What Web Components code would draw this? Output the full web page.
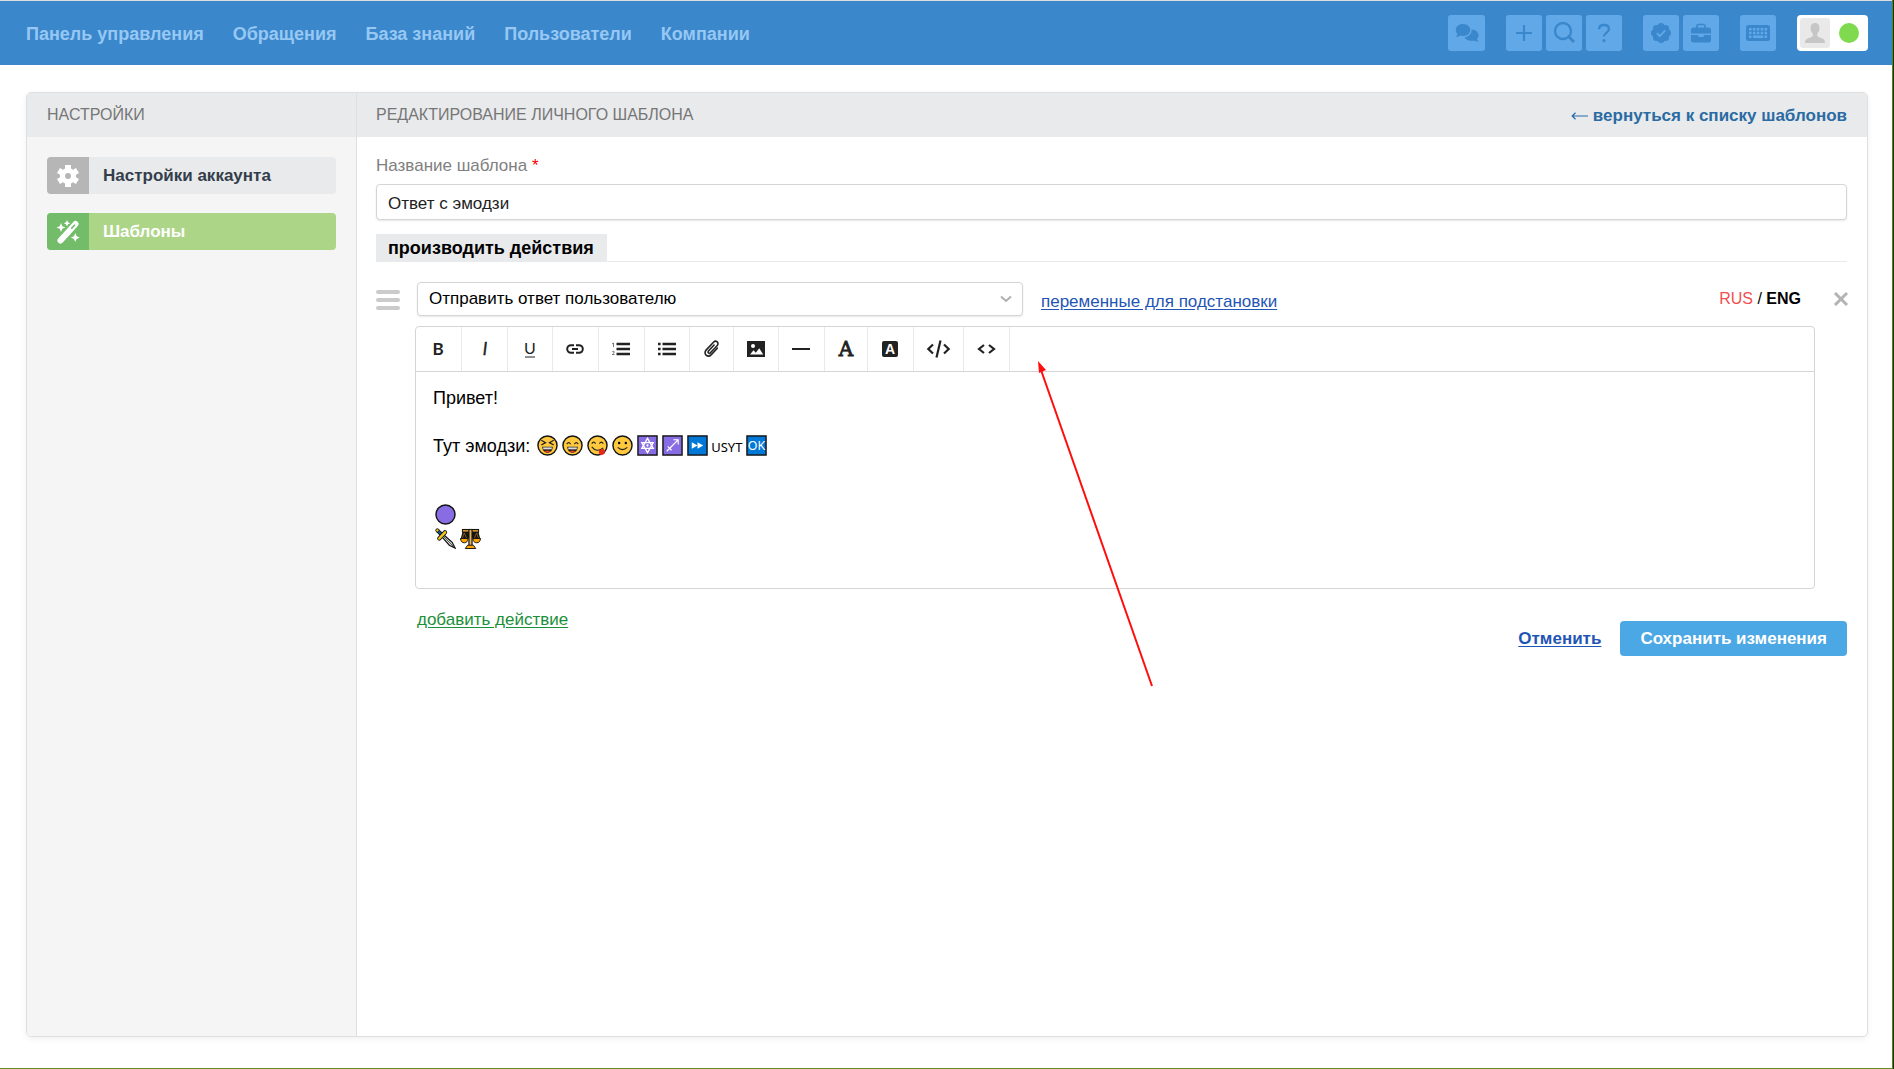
<!DOCTYPE html>
<html lang="ru">
<head>
<meta charset="utf-8">
<meta name="viewport" content="width=device-width, initial-scale=1">
<title>Редактирование личного шаблона</title>
<style>
    html {
        background: #222c1c;
    }
    body {
        box-sizing: border-box;
        display: flex;
        flex-direction: column;
        min-height: 100vh;
        margin: 0 1px 0 0;
        border-right: 1px solid #4f8a10;
        border-bottom: 1px solid #5f8f22;
        background: #fff;
        color: #000;
        font: 17px/20px "Liberation Sans", Arial, sans-serif;
    }
    settings-panel {
        flex: 1;
        margin: 27px 24px 31px 26px;
    }
    rich-editor small {
        margin: 0 2px 0 1px;
        font: 13px/20px "Noto Sans", sans-serif;
    }
</style>
</head>
<body>

<app-header>
    <nav-link href="#dashboard">Панель управления</nav-link>
    <nav-link href="#cases">Обращения</nav-link>
    <nav-link href="#kb">База знаний</nav-link>
    <nav-link href="#users">Пользователи</nav-link>
    <nav-link href="#companies">Компании</nav-link>
    <tool-group slot="tools">
        <tool-button icon="chats" label="Чаты" wide></tool-button>
    </tool-group>
    <tool-group slot="tools">
        <tool-button icon="plus" label="Создать"></tool-button>
        <tool-button icon="search" label="Поиск"></tool-button>
        <tool-button icon="question" label="Помощь"></tool-button>
    </tool-group>
    <tool-group slot="tools">
        <tool-button icon="verified" label="Задачи"></tool-button>
        <tool-button icon="briefcase" label="Компания"></tool-button>
    </tool-group>
    <tool-group slot="tools">
        <tool-button icon="keyboard" label="Горячие клавиши"></tool-button>
    </tool-group>
    <user-status slot="tools"></user-status>
</app-header>

<settings-panel>
    <span slot="side-title">НАСТРОЙКИ</span>
    <side-link slot="side" icon="gear" href="#account">Настройки аккаунта</side-link>
    <side-link slot="side" icon="wand" href="#templates" active>Шаблоны</side-link>
    <span slot="title">РЕДАКТИРОВАНИЕ ЛИЧНОГО ШАБЛОНА</span>
    <back-link slot="back" href="#list">вернуться к списку шаблонов</back-link>
    <template-form>
        <template-action>
            <rich-editor>
                <p>Привет!</p>
                <p>Тут эмодзи: <emoji-icon name="laugh"></emoji-icon><emoji-icon name="grin"></emoji-icon><emoji-icon name="yum"></emoji-icon><emoji-icon name="smile"></emoji-icon><emoji-icon name="star"></emoji-icon><emoji-icon name="sagittarius"></emoji-icon><emoji-icon name="forward"></emoji-icon><small>USYT</small><emoji-icon name="ok"></emoji-icon></p>
                <p class="far"><emoji-icon name="circle"></emoji-icon><br><emoji-icon name="dagger"></emoji-icon><emoji-icon name="scales"></emoji-icon></p>
            </rich-editor>
        </template-action>
    </template-form>
</settings-panel>

<pointer-arrow></pointer-arrow>

<script>
// icons: [width, height, markup]
const ICONS = {
    chats: [24, 20, `
        <path fill="currentColor" d="M8 1C3.600 1 .8 3.700.8 7c0 1.700.7 3 1.800 4.100-.3 1-1 1.800-1.900 2.600 1.800.2 3.500-.3 4.800-1.200.8.300 1.600.4 2.500.4 4.300 0 7.300-2.700 7.300-5.900S12.300 1 8 1z"/>
        <path fill="currentColor" d="M16.600 6.500c.3 4.100-3 7.300-7.100 7.700 1.200 2.400 4 3.700 7 3.600.9 0 1.700-.1 2.400-.4 1.400.9 3 1.300 4.700 1.100-.9-.7-1.500-1.500-1.800-2.500 1.100-1 1.800-2.300 1.800-3.800 0-3-3-5.500-7-5.700z"/>`],
    plus: [18, 18, `<path d="M9 1v16M1 9h16" stroke="currentColor" stroke-width="2.200" fill="none"/>`],
    search: [22, 22, `<circle cx="10" cy="9" r="8" stroke="currentColor" stroke-width="2.400" fill="none"/><path d="M15.500 14.500l5.500 5.500" stroke="currentColor" stroke-width="3"/>`],
    question: [14, 20, `<path d="M2 6.200C2 3.500 4 2 7 2s5 1.500 5 4.200c0 3.300-5 3.500-5 7.300" fill="none" stroke="currentColor" stroke-width="2.300"/><circle cx="7" cy="17.600" r="1.600" fill="currentColor"/>`],
    verified: [20, 20, `
        <g fill="currentColor"><circle cx="10" cy="10" r="8"/>
        <circle cx="10" cy="3.500" r="3.500"/><circle cx="14.600" cy="5.400" r="3.500"/><circle cx="16.500" cy="10" r="3.500"/><circle cx="14.600" cy="14.600" r="3.500"/>
        <circle cx="10" cy="16.500" r="3.500"/><circle cx="5.400" cy="14.600" r="3.500"/><circle cx="3.500" cy="10" r="3.500"/><circle cx="5.400" cy="5.400" r="3.500"/></g>
        <path d="M5.800 10.200l2.900 2.900 5.500-5.700" fill="none" stroke="#61a8e8" stroke-width="1.800"/>`],
    briefcase: [20, 20, `
        <path d="M6 5V3.200Q6 1.500 7.500 1.500h5q1.500 0 1.500 1.700V5" fill="none" stroke="currentColor" stroke-width="1.700"/>
        <path fill="currentColor" d="M2.500 4.500h15Q20 4.500 20 7v3.600H0V7q0-2.500 2.500-2.500z"/>
        <path fill="currentColor" d="M0 12h7.200v1.200q0 .8.8.8h4q.8 0 .8-.8V12H20v5q0 2.500-2.500 2.500h-15Q0 19.500 0 17z"/>`],
    keyboard: [24, 16, `
        <rect width="24" height="16" rx="2.500" fill="currentColor"/>
        <g fill="#61a8e8">
        <path d="M3 3h2.500v2.500H3zM6.900 3h2.500v2.500H6.900zM10.800 3h2.500v2.500h-2.500zM14.700 3h2.500v2.500h-2.500zM18.600 3h2.500v2.500h-2.500z"/>
        <path d="M3 6.800h2.500v2.500H3zM6.900 6.800h2.500v2.500H6.900zM10.800 6.800h2.500v2.500h-2.500zM14.700 6.800h2.500v2.500h-2.500zM18.600 6.800h2.500v2.500h-2.500z"/>
        <path d="M3 10.600h2.500V13H3zM6.900 10.600h10.300V13H6.900zM18.600 10.600h2.500V13h-2.500z"/></g>`],
    person: [20, 20, `<path fill="currentColor" d="M10 0c3 0 4.500 2 4.500 5 0 2.300-.9 4.500-2.200 5.600v2.200c.4 1.700 4.800 2.100 6.700 3.700.7.700 1 2 1 3.500H0c0-1.500.3-2.800 1-3.500 1.900-1.600 6.300-2 6.700-3.700v-2.200C6.400 9.500 5.500 7.300 5.500 5c0-3 1.500-5 4.500-5z"/>`],
    gear: [22, 22, `
        <g stroke="currentColor" stroke-width="6"><path d="M11 0v22M1.500 5.500l19 11M1.500 16.500l19-11"/></g>
        <circle cx="11" cy="11" r="8" fill="currentColor"/><circle cx="11" cy="11" r="3" fill="#b6b6b6"/>`],
    wand: [24, 24, `
        <path d="M4.500 20.500L19.500 4" stroke="currentColor" stroke-width="6" stroke-linecap="round"/>
        <path d="M15.300 8.600l3.600-3.900" stroke="#73bd6a" stroke-width="1.600"/>
        <g fill="currentColor"><path d="M5 3l1.300 3.200 3.200 1.300-3.200 1.300L5 12 3.700 8.800.5 7.500l3.200-1.300z"/>
        <path d="M11 0l1 2.300 2.300 1-2.300 1-1 2.300-1-2.300-2.300-1 2.300-1z"/>
        <path d="M19.300 13l1.300 3.300 3.200 1.300-3.200 1.300-1.300 3.200-1.300-3.200-3.200-1.300 3.200-1.300z"/></g>`],
    drag: [24, 22, `<path d="M2 3h20M2 11h20M2 19h20" stroke="currentColor" stroke-width="4" stroke-linecap="round"/>`],
    chevron: [12, 8, `<path d="M1 1.500l5 4.500 5-4.500" fill="none" stroke="currentColor" stroke-width="2"/>`],
    close: [14, 14, `<path d="M1 1l12 12M13 1L1 13" stroke="currentColor" stroke-width="3"/>`],
    arrow: [17, 10, `<path d="M1 5h16M4.500 1.800L1.200 5l3.300 3.200" fill="none" stroke="currentColor" stroke-width="1.200"/>`],
    bold: [19, 18, `<text x="9" y="15" text-anchor="middle" font-family="Lato, sans-serif" font-size="17" font-weight="700" fill="currentColor">B</text>`],
    italic: [19, 18, `<text x="10" y="15" text-anchor="middle" font-family="Lato, sans-serif" font-size="17" font-style="italic" stroke="currentColor" stroke-width=".4" fill="currentColor">I</text>`],
    underline: [18, 18, `<text x="9" y="14" text-anchor="middle" font-family="Lato, sans-serif" font-size="16" fill="currentColor">U</text><path d="M4 17h10" stroke="currentColor"/>`],
    link: [19, 18, `<path d="M8 5.200H5a3.800 3.800 0 0 0 0 7.600h3M10 5.200h3a3.800 3.800 0 0 1 0 7.600h-3M6 9h6" fill="none" stroke="currentColor" stroke-width="2"/>`],
    ordered: [19, 18, `<path d="M4.500 4H18M4.500 9H18M4.500 14H18" stroke="currentColor" stroke-width="2.400"/><path d="M0 4l1.500-1v4M.3 11.700q2-1 2 .3 0 .8-2 2.500h2.300" fill="none" stroke="currentColor" stroke-width=".6"/>`],
    unordered: [18, 18, `<path d="M4.500 4H18M4.500 9H18M4.500 14H18M0 4h2.600M0 9h2.600M0 14h2.600" stroke="currentColor" stroke-width="2.400"/>`],
    clip: [17, 20, `<path d="M14.300 10.200l-6 6.400c-1.600 1.700-3.800 1.800-5.200.5-1.500-1.400-1.400-3.500.2-5.200l7.200-7.700c1.200-1.200 2.700-1.200 3.700-.3s1.100 2.500-.1 3.800l-6.700 7.100c-.6.700-1.400.7-2 .2-.5-.5-.5-1.300.1-2l5.600-6" transform="translate(0 -1)" fill="none" stroke="currentColor" stroke-width="1.600" stroke-linecap="round"/>`],
    image: [18, 18, `<path fill="currentColor" d="M0 1h18v16H0z"/><circle cx="6" cy="6" r="2" fill="#fff"/><path d="M3 14.500l3.500-4.300 2.300 2.500 3.400-4.500 4 6.300z" fill="#fff"/>`],
    line: [19, 18, `<path d="M0 9h18" stroke="currentColor" stroke-width="2"/>`],
    color: [16, 18, `<text x="8" y="16" text-anchor="middle" font-family="DejaVu Serif, serif" font-size="20" stroke="currentColor" stroke-width=".9" fill="currentColor">A</text>`],
    fill: [19, 18, `<rect x="1" y="1" width="16" height="16" rx="2" fill="currentColor"/><text x="9" y="14" text-anchor="middle" font-family="Liberation Sans, sans-serif" font-size="14" font-weight="700" fill="#fff">A</text>`],
    code: [23, 18, `<path d="M6 4.500L1.300 9 6 13.500M17 4.500L21.700 9 17 13.500M13.500.5L9.500 17.500" fill="none" stroke="currentColor" stroke-width="2.200"/>`],
    source: [19, 18, `<path d="M7 5L2 9l5 4M12 5l5 4-5 4" fill="none" stroke="currentColor" stroke-width="2.200"/>`]
}

const FACE = `<circle cx="11" cy="11" r="10" fill="#ffc83d" stroke="#141414" stroke-width="1.500"/>`
const GRIN = `<path d="M5.500 12.200h11c0 4-2.500 6.300-5.500 6.300s-5.500-2.300-5.500-6.300z" fill="#222"/><path d="M6.500 13h9v2h-9z" fill="#ddd"/><path d="M8 17.300q3-2 6 0-3 2-6 0z" fill="#f03a17"/>`
const box = color => `<rect x="1" y="1" width="20" height="20" fill="${color}" stroke="#141414" stroke-width="1.500"/>`

const EMOJI = {
    laugh: FACE + GRIN + `<path d="M4.500 5.500L9 8l-4.500 2.500M17.500 5.500L13 8l4.500 2.500" fill="none" stroke="#222" stroke-width="1.300"/>`,
    grin: FACE + GRIN + `<path d="M5 9.500q2-3 4 0M13 9.500q2-3 4 0" fill="none" stroke="#222" stroke-width="1.200"/>`,
    yum: FACE + `<path d="M5 9q2-3 4 0M13 9q2-3 4 0M5 12.500q5 6.500 12 1" fill="none" stroke="#222" stroke-width="1.200"/><path d="M12.500 16l5-1.500q2 2.500 1 5-1 1.500-3.500 1.500-3 0-2.500-5z" fill="#e8281a"/>`,
    smile: FACE + `<path d="M6 13q5 4.500 10 0" fill="none" stroke="#222" stroke-width="1.300"/><circle cx="7.500" cy="8.500" r="1.300"/><circle cx="14.500" cy="8.500" r="1.300"/>`,
    star: box('#886ce4') + `<path d="M11 3.500l6 10.500H5zM11 18.500L5 8h12z" fill="none" stroke="#fff" stroke-width="1.400"/><circle cx="11" cy="11" r="1.200" fill="#fff"/>`,
    sagittarius: box('#886ce4') + `<path d="M5 17L17 5M12 5h5v5M6 12l4 4" fill="none" stroke="#fff" stroke-width="1.200"/>`,
    forward: box('#0078d7') + `<path d="M5 7.500l6 3.500-6 3.500zM11 7.500l6 3.500-6 3.500z" fill="#fff"/>`,
    ok: box('#0078d7') + `<text x="11" y="16" text-anchor="middle" font-family="Noto Sans, sans-serif" font-size="13" fill="#fff">OK</text>`,
    circle: `<circle cx="11" cy="11" r="10" fill="#886ce4" stroke="#141414" stroke-width="1.500"/>`,
    dagger: `
        <path d="M7 9l2-2 9 8 3 6-6-3z" fill="#d8dadc" stroke="#141414" stroke-width="1.300"/><path d="M8.500 8.500L19 19" stroke="#555"/>
        <path d="M3 3l5 5" stroke="#141414" stroke-width="4"/><path d="M3 3l5 5" stroke="#0063b1" stroke-width="2"/>
        <path d="M4.500 11l6-6.500" stroke="#141414" stroke-width="4.500" stroke-linecap="round"/><path d="M4.500 11l6-6.500" stroke="#f2c61f" stroke-width="2.700" stroke-linecap="round"/>
        <circle cx="2.500" cy="2.500" r="1.700" fill="#f2c61f" stroke="#141414"/>`,
    scales: `
        <path d="M3 3h16l2.500 9h-8L11 6l-2.500 6h-8z" fill="#141414"/>
        <path d="M4.500 5L2.500 11M4.500 5l2.500 6M17.500 5l-2.500 6M17.500 5l2 6" stroke="#c98a17" stroke-width=".6"/>
        <path d="M2 3h18" stroke="#141414" stroke-width="4"/><path d="M3 3h16" stroke="#ffb02e" stroke-width="1.400"/>
        <path d="M11 1v18" stroke="#141414" stroke-width="4.500"/><path d="M11 2v17" stroke="#e8b45a" stroke-width="2"/>
        <path d="M.5 11h8q-.5 4.500-4 4.500T.5 11zM13.500 11h8q-.5 4.500-4 4.500t-4-4.500z" fill="#ffa500" stroke="#141414"/>
        <path d="M8 18h6l2.500 3.500h-11z" fill="#ffa500" stroke="#141414"/>`
}

class BaseElement extends HTMLElement {
    constructor() {
        super();
        this.attachShadow({ mode: 'open' });
    }
    connectedCallback() {
        this.shadowRoot.innerHTML = this.render()
    }
}

class AppIcon extends BaseElement {
    render() {
        const [w, h, body] = ICONS[this.getAttribute('name')]
        return `
        <style>
            :host { display: inline-flex; flex: none; }
            svg { display: block; overflow: visible; }
        </style>
        <svg width="${w}" height="${h}" viewBox="0 0 ${w} ${h}" aria-hidden="true">${body}</svg>`
    }
}

class EmojiIcon extends BaseElement {
    render() {
        return `
        <style>
            :host { display: inline-block; width: 21px; height: 21px; margin: 0 2px; vertical-align: -4px; }
            svg { display: block; }
        </style>
        <svg width="21" height="21" viewBox="0 0 22 22">${EMOJI[this.getAttribute('name')]}</svg>`
    }
}

class AppHeader extends BaseElement {
    render() {
        return `
        <style>
            :host { display: block; background: #3b87cc; border-top: 1px solid #dcdcdc; }
            header { display: flex; align-items: center; justify-content: space-between; min-height: 64px; padding: 0 24px 0 26px; }
            nav { display: flex; gap: 29px; padding-top: 2px; }
            .tools { display: flex; gap: 21px; }
        </style>
        <header>
            <nav><slot></slot></nav>
            <div class="tools"><slot name="tools"></slot></div>
        </header>`
    }
}

class NavLink extends BaseElement {
    render() {
        return `
        <style>
            :host { display: block; }
            a { color: #97c8f3; font-size: 18px; font-weight: bold; text-decoration: none; white-space: nowrap; }
        </style>
        <a href="${this.getAttribute('href')}"><slot></slot></a>`
    }
}

class ToolGroup extends BaseElement {
    render() {
        return `
        <style>
            :host { display: flex; gap: 4px; }
        </style>
        <slot></slot>`
    }
}

class ToolButton extends BaseElement {
    render() {
        const width = this.hasAttribute('wide') ? 37 : 36
        return `
        <style>
            :host { display: block; }
            button { display: flex; align-items: center; justify-content: center; width: ${width}px; height: 36px; padding: 0; border: 0; border-radius: 3px; background: #61a8e8; color: #3b87cc; cursor: pointer; }
        </style>
        <button type="button" aria-label="${this.getAttribute('label')}"><app-icon name="${this.getAttribute('icon')}"></app-icon></button>`
    }
}

class UserStatus extends BaseElement {
    render() {
        return `
        <style>
            :host { display: block; }
            button { display: flex; align-items: center; gap: 9px; height: 36px; padding: 0 9px 0 3px; border: 0; border-radius: 4px; background: #fff; cursor: pointer; }
            .photo { display: flex; align-items: center; justify-content: center; width: 30px; height: 30px; border-radius: 3px; background: #e9e9e9; color: #c6c6c6; }
            .dot { width: 20px; height: 20px; border-radius: 50%; background: #7fda50; }
        </style>
        <button type="button" aria-label="Профиль">
            <span class="photo"><app-icon name="person"></app-icon></span>
            <span class="dot"></span>
        </button>`
    }
}

class SettingsPanel extends BaseElement {
    render() {
        return `
        <style>
            :host { display: grid; grid-template-columns: 330px 1fr; grid-template-rows: 44px 1fr; border: 1px solid #dedfe0; border-radius: 5px; box-shadow: 0 2px 6px rgba(0, 0, 0, .06); overflow: hidden; }
            .head { display: flex; align-items: center; justify-content: space-between; padding: 0 20px; background: #e9eaec; color: #767676; font-size: 16px; }
            .left { border-right: 1px solid #dedfe0; }
            .head.main { padding-left: 19px; }
            aside { display: flex; flex-direction: column; gap: 19px; padding: 20px; background: #f5f5f5; }
            main { padding: 19px 20px 18px 19px; }
        </style>
        <div class="head left"><slot name="side-title"></slot></div>
        <div class="head main"><slot name="title"></slot><slot name="back"></slot></div>
        <aside class="left"><slot name="side"></slot></aside>
        <main><slot></slot></main>`
    }
}

class SideLink extends BaseElement {
    render() {
        const active = this.hasAttribute('active')
        return `
        <style>
            :host { display: block; }
            a { display: flex; align-items: center; height: 37px; border-radius: 4px; overflow: hidden; background: ${active ? '#add588' : '#e9eaec'}; color: ${active ? '#fff' : '#343e4b'}; font-weight: bold; text-decoration: none; }
            .icon { display: flex; align-items: center; justify-content: center; width: 42px; height: 37px; margin-right: 14px; background: ${active ? '#73bd6a' : '#b6b6b6'}; color: #fff; }
        </style>
        <a href="${this.getAttribute('href')}"><span class="icon"><app-icon name="${this.getAttribute('icon')}"></app-icon></span><slot></slot></a>`
    }
}

class BackLink extends BaseElement {
    render() {
        return `
        <style>
            :host { display: block; padding-top: 2px; }
            a { display: flex; align-items: center; gap: 5px; color: #2a6ba3; font-size: 17px; font-weight: bold; text-decoration: none; }
        </style>
        <a href="${this.getAttribute('href')}"><app-icon name="arrow"></app-icon><slot></slot></a>`
    }
}

class TemplateForm extends BaseElement {
    render() {
        return `
        <style>
            :host { display: block; }
            label { display: block; color: #808080; }
            label span { color: #f00; }
            input { box-sizing: border-box; display: block; width: 100%; height: 36px; margin: 8px 0 14px; padding: 3px 11px 0; border: 1px solid #d5d5d5; border-radius: 4px; box-shadow: 0 1px 2px rgba(0, 0, 0, .1); color: #222; font: inherit; }
            .tab { display: flex; border-bottom: 1px solid #e9eaec; margin-bottom: 20px; }
            h2 { margin: 0; padding: 4px 13px 3px 12px; background: #e9eaec; font-size: 18px; line-height: 20px; }
            .footer { display: flex; justify-content: space-between; padding: 21px 0 0 41px; }
            a { color: #1c8f3a; text-underline-offset: 2px; }
            .buttons { display: flex; align-items: center; gap: 19px; margin-top: 11px; }
            .buttons a { color: #1f55b5; font-weight: bold; }
            button { height: 35px; padding: 0 20px; border: 0; border-radius: 4px; background: #4ca8e4; color: #fff; font: inherit; font-weight: bold; cursor: pointer; }
        </style>
        <form>
            <label for="name">Название шаблона <span>*</span></label>
            <input id="name" type="text" value="Ответ с эмодзи">
            <div class="tab"><h2>производить действия</h2></div>
            <slot></slot>
            <div class="footer">
                <div><a href="#add">добавить действие</a></div>
                <div class="buttons"><a href="#cancel">Отменить</a><button type="button">Сохранить изменения</button></div>
            </div>
        </form>`
    }
}

class TemplateAction extends BaseElement {
    render() {
        return `
        <style>
            :host { display: block; }
            .row { display: flex; align-items: center; height: 34px; margin-bottom: 10px; }
            .drag, .close { display: flex; padding: 0; border: 0; background: none; color: #cbcbcb; cursor: pointer; }
            .drag { margin: 2px 17px 0 0; cursor: move; }
            .pick { display: grid; align-items: center; flex: 0 1 606px; margin-right: 18px; }
            .pick > * { grid-area: 1 / 1; }
            .pick app-icon { justify-self: end; margin-right: 11px; color: #b0b0b0; pointer-events: none; }
            select { appearance: none; width: 100%; height: 34px; padding: 0 11px; border: 1px solid #d5d5d5; border-radius: 4px; box-shadow: 0 1px 2px rgba(0, 0, 0, .1); background: #fff; color: #000; font: inherit; }
            a { margin-top: 6px; color: #1f55b5; text-underline-offset: 2px; }
            .lang { margin-left: auto; font-size: 16px; }
            .lang button { padding: 0; border: 0; background: none; color: #f0504f; font: inherit; cursor: pointer; }
            .lang .on { color: #000; font-weight: bold; }
            .close { margin: 0 -1px 0 33px; color: #b3b3b3; }
            .body { margin: 0 32px 0 39px; }
        </style>
        <div class="row">
            <button class="drag" type="button" aria-label="Переместить"><app-icon name="drag"></app-icon></button>
            <div class="pick">
                <select aria-label="Действие"><option>Отправить ответ пользователю</option></select>
                <app-icon name="chevron"></app-icon>
            </div>
            <a href="#vars">переменные для подстановки</a>
            <span class="lang"><button type="button">RUS</button> / <button type="button" class="on">ENG</button></span>
            <button class="close" type="button" aria-label="Удалить"><app-icon name="close"></app-icon></button>
        </div>
        <div class="body"><slot></slot></div>`
    }
}

class RichEditor extends BaseElement {
    render() {
        const tools = ['bold', 'italic', 'underline', 'link', 'ordered', 'unordered', 'clip', 'image', 'line', 'color', 'fill', 'code', 'source']
        return `
        <style>
            :host { display: block; border: 1px solid #d5d5d5; border-radius: 4px; }
            .bar { display: flex; border-bottom: 1px solid #d5d5d5; }
            .text { box-sizing: border-box; min-height: 216px; padding: 14px 18px 10px 17px; font-size: 18px; line-height: 24px; }
            ::slotted(p) { margin: 0 0 24px; }
            ::slotted(p.far) { margin-top: 45px; }
        </style>
        <div class="bar" role="toolbar">${tools.map(t => `<editor-button icon="${t}"></editor-button>`).join('')}</div>
        <div class="text"><slot></slot></div>`
    }
}

class EditorButton extends BaseElement {
    render() {
        const icon = this.getAttribute('icon')
        return `
        <style>
            :host { display: block; }
            button { display: flex; align-items: center; justify-content: center; height: 44px; padding: 0 13px; border: 0; border-right: 1px solid #e9e9e9; background: none; color: #222; cursor: pointer; }
        </style>
        <button type="button" aria-label="${icon}"><app-icon name="${icon}"></app-icon></button>`
    }
}

// red arrow that points at the free part of the toolbar
class PointerArrow extends BaseElement {
    render() {
        return `
        <style>
            :host { position: absolute; left: 1036px; top: 360px; pointer-events: none; }
            svg { display: block; }
        </style>
        <svg width="120" height="330" viewBox="0 0 120 330"><path d="M5 10L116 326" stroke="#ff0d0d" stroke-width="2"/><path d="M2 1l8 9-7 3z" fill="#ff0d0d"/></svg>`
    }
}

customElements.define('app-icon', AppIcon);
customElements.define('emoji-icon', EmojiIcon);
customElements.define('app-header', AppHeader);
customElements.define('nav-link', NavLink);
customElements.define('tool-group', ToolGroup);
customElements.define('tool-button', ToolButton);
customElements.define('user-status', UserStatus);
customElements.define('settings-panel', SettingsPanel);
customElements.define('side-link', SideLink);
customElements.define('back-link', BackLink);
customElements.define('template-form', TemplateForm);
customElements.define('template-action', TemplateAction);
customElements.define('rich-editor', RichEditor);
customElements.define('editor-button', EditorButton);
customElements.define('pointer-arrow', PointerArrow);
</script>
</body>
</html>
